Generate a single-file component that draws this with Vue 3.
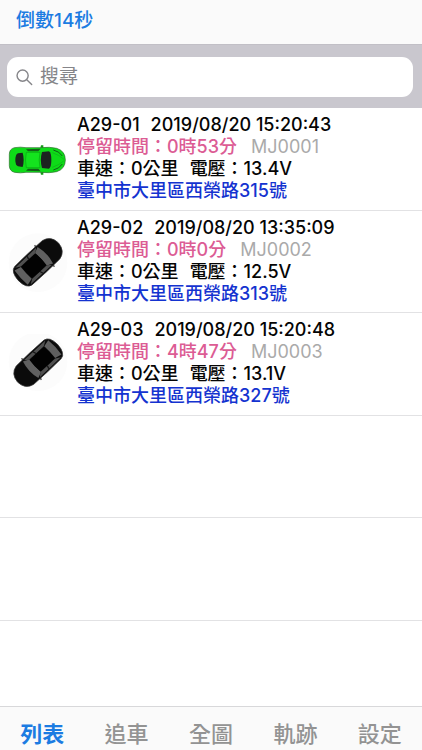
<script setup>
import { ref } from 'vue'

const keyword = ref('')
const countdown = ref(14)

const vehicles = [
  { id: 'A29-01', time: '2019/08/20 15:20:43', stay: '0時53分', code: 'MJ0001', speed: '0公里', volt: '13.4V', address: '臺中市大里區西榮路315號', car: 'green' },
  { id: 'A29-02', time: '2019/08/20 13:35:09', stay: '0時0分', code: 'MJ0002', speed: '0公里', volt: '12.5V', address: '臺中市大里區西榮路313號', car: 'black', view: '24 19 180 180', pose: 'translate(114 109) rotate(-43)' },
  { id: 'A29-03', time: '2019/08/20 15:20:48', stay: '4時47分', code: 'MJ0003', speed: '0公里', volt: '13.1V', address: '臺中市大里區西榮路327號', car: 'black', view: '24 28 180 180', pose: 'translate(114 115) rotate(137)' },
]

const tabs = ['列表', '追車', '全圖', '軌跡', '設定']
const active = ref('列表')
</script>

<template>
  <div class="page">
    <header class="topbar">
      <button type="button" class="refresh">倒數{{ countdown }}秒</button>
    </header>

    <div class="search">
      <label class="field">
        <svg class="lens" viewBox="0 0 18 18" aria-hidden="true">
          <circle cx="7" cy="7" r="5.9" />
          <path d="M11.4 11.4 L16.6 16.4" />
        </svg>
        <input v-model="keyword" type="search" placeholder="搜尋" aria-label="搜尋" />
      </label>
    </div>

    <ul class="list">
      <li v-for="v in vehicles" :key="v.id" class="row">
        <svg v-if="v.car === 'green'" class="car" viewBox="24 -3 180 180" aria-hidden="true">
          <path d="M121 53 L123 46 L130 46 L130 54 Z M121 127 L123 134 L130 134 L130 126 Z" fill="#159a16" />
          <path d="M43 53 Q62 50 78 53 L120 53 Q150 50 170 55 Q196 63 196 90 Q196 117 170 125 Q150 130 120 127 L78 127 Q62 130 43 127 Q28 122 28 107 L28 73 Q28 57 43 53 Z" fill="#0edb18" stroke="#2d6a2d" stroke-width="2" />
          <path d="M78 58 L122 56 L115 64 L84 64 Z M78 122 L122 124 L115 116 L84 116 Z" fill="#145f18" />
          <path d="M79 67 Q74 90 79 113 L120 113 Q115 90 120 67 Z" fill="#14e31e" stroke="#0ba512" stroke-width="2" />
          <path d="M54 70 L68 68 Q74 90 68 111 L54 109 Q46 106 46 90 Q46 73 54 70 Z" fill="#1a251d" />
          <path d="M126 66 L147 64 Q154 68 154 90 Q154 112 147 116 L126 114 Q119 90 126 66 Z" fill="#1c2420" />
          <path d="M160 60 Q178 64 187 78 M160 120 Q178 116 187 102" fill="none" stroke="#125b18" stroke-width="3" />
          <path d="M157 68 Q178 75 192 88 M157 112 Q178 105 192 92" fill="none" stroke="#0eb416" stroke-width="2" />
        </svg>
        <svg v-else class="car" :viewBox="v.view" aria-hidden="true">
          <circle cx="114" cy="111" r="88" fill="#fcfcfc" />
          <g :transform="v.pose">
            <path d="M23 -38 L25 -44 L29 -44 L29 -37 Z M23 38 L25 44 L29 44 L29 37 Z" fill="#555555" />
            <path d="M-60 -38 Q0 -40 54 -38 Q82 -32 84 0 Q82 32 54 38 Q0 40 -60 38 Q-80 35 -81 0 Q-80 -35 -60 -38 Z" fill="#0b0b0b" stroke="#333333" stroke-width="2" />
            <path d="M-69 -29 Q-73 0 -69 29 L-48 24 Q-50 0 -48 -24 Z" fill="#5f5f5f" />
            <path d="M12 -26 L30 -34 Q40 0 30 34 L12 26 Q15 0 12 -26 Z" fill="#606060" />
            <path d="M-62 -34 L25 -35 L13 -25 L-47 -25 Z M-62 34 L25 35 L13 25 L-47 25 Z" fill="#505050" />
            <path d="M-46 -23 Q-16 -25 12 -23 Q15 0 12 23 Q-16 25 -46 23 Q-49 0 -46 -23 Z" fill="#020202" />
            <path d="M-15 -25 L-12 -35 M-15 25 L-12 35" stroke="#151515" stroke-width="4" />
          </g>
        </svg>
        <div class="info">
          <p><span>{{ v.id }}</span><span class="stamp">{{ v.time }}</span></p>
          <p class="stay"><span>停留時間：{{ v.stay }}</span><span class="code">{{ v.code }}</span></p>
          <p><span>車速：{{ v.speed }}</span><span class="stamp">電壓：{{ v.volt }}</span></p>
          <p class="address">{{ v.address }}</p>
        </div>
      </li>
      <li v-for="n in 2" :key="n" class="row" aria-hidden="true"></li>
    </ul>

    <nav class="tabs">
      <button v-for="t in tabs" :key="t" type="button" :class="{ on: t === active }" @click="active = t">{{ t }}</button>
    </nav>
  </div>
</template>

<style>
body {
  margin: 0;
}
</style>

<style scoped>
.page {
  display: flex;
  flex-direction: column;
  min-height: 100vh;
  background: #ffffff;
  color: #050505;
  font-family: Inter, "Noto Sans CJK TC", sans-serif;
  font-size: 18px;
  font-weight: 500;
}
button {
  border: 0;
  padding: 0;
  background: none;
  font: inherit;
  cursor: pointer;
}
.topbar {
  box-sizing: border-box;
  height: 44px;
  padding: 7px 16px;
  background: #fafafa;
}
.refresh {
  display: block;
  font-size: 19px;
  line-height: 28px;
  color: #1c7ce2;
}
.search {
  padding: 12px 9px 11px 7px;
  background: #c9c7ce;
  border-top: 1px solid #c1bfc6;
}
.field {
  display: flex;
  align-items: center;
  gap: 7px;
  height: 40px;
  padding: 0 9px;
  border-radius: 11px;
  background: #ffffff;
}
.lens {
  flex: none;
  width: 17px;
  height: 17px;
  fill: none;
  stroke: #86868a;
  stroke-width: 1.5;
  stroke-linecap: round;
}
.field input {
  flex: 1;
  min-width: 0;
  padding: 0;
  border: 0;
  outline: 0;
  background: none;
  font: inherit;
  font-size: 19px;
  font-weight: 400;
  line-height: 28px;
  appearance: none;
}
.field input::placeholder {
  color: #858589;
  opacity: 1;
}
.list {
  flex: 1;
  margin: 0;
  padding: 0;
  list-style: none;
}
.row {
  box-sizing: border-box;
  display: flex;
  align-items: center;
  gap: 9px;
  min-height: 103px;
  padding: 0 8px;
  border-bottom: 1px solid #e2e2e4;
}
.row:nth-child(even) {
  min-height: 102px;
}
.car {
  flex: none;
  width: 60px;
  height: 60px;
}
.info {
  padding-bottom: 2px;
}
.info p {
  margin: 0;
  line-height: 22px;
  white-space: nowrap;
}
.stamp {
  margin-left: 11px;
}
.info .stay {
  color: #dc5c94;
}
.code {
  margin-left: 14px;
  color: #aaaaaa;
  font-weight: 400;
}
.info .address {
  color: #1433d0;
}
.tabs {
  box-sizing: border-box;
  display: flex;
  height: 44px;
  padding-top: 11px;
  background: #fafafa;
  border-top: 1px solid #d8d8da;
}
.tabs button {
  flex: 1;
  height: 32px;
  font-size: 22px;
  line-height: 32px;
  color: #939393;
}
.tabs .on {
  color: #1c7ce2;
  font-weight: 700;
}
</style>
